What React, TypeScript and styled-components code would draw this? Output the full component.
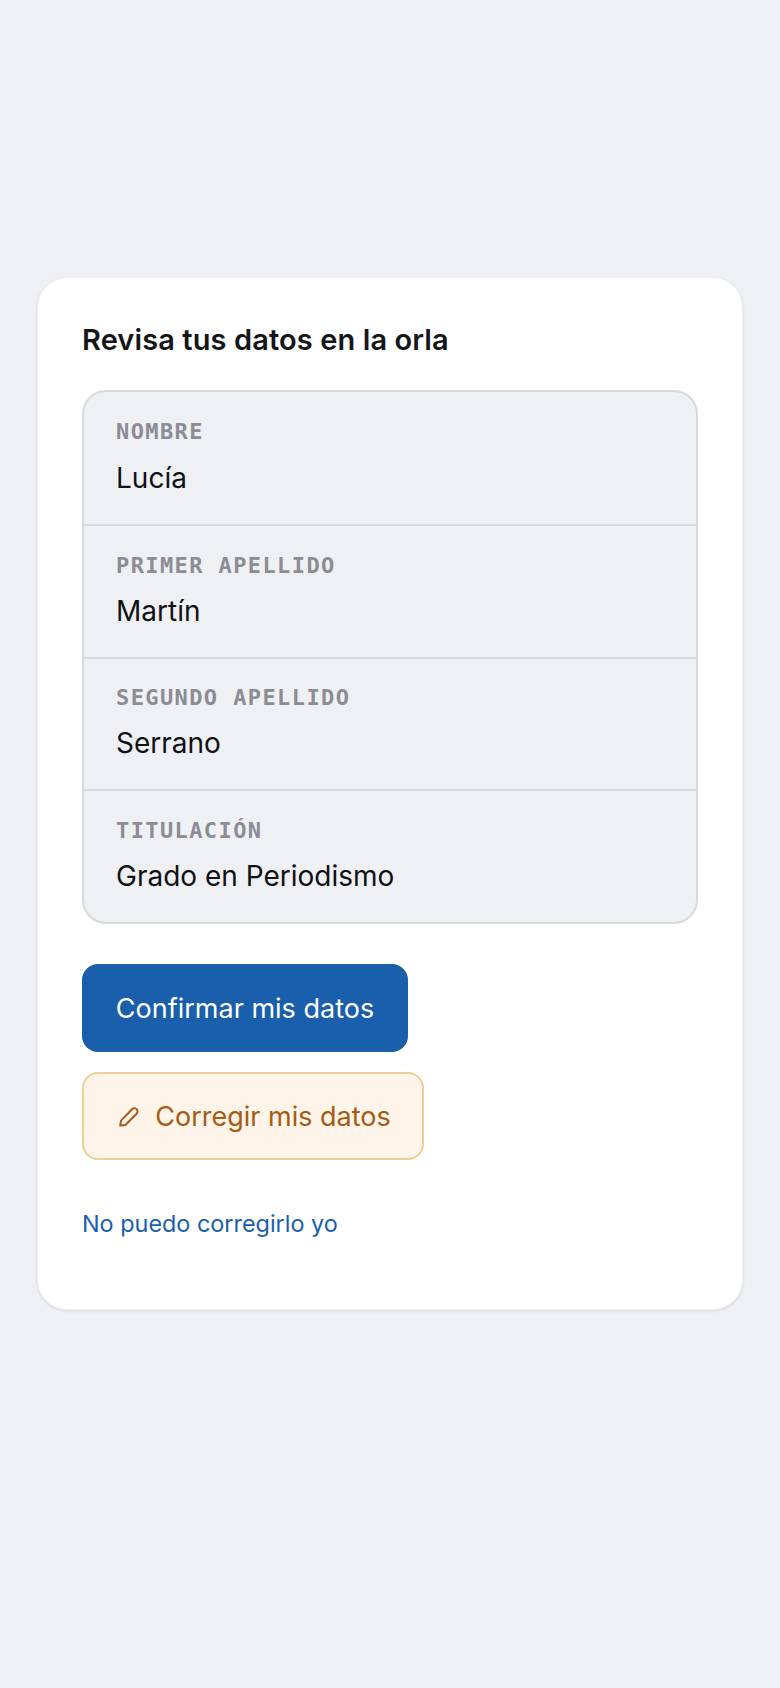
import React from "react";
import styled, { createGlobalStyle } from "styled-components";

const Global = createGlobalStyle`
  html, body { margin: 0; padding: 0; background: #eef0f4; }
  * { box-sizing: border-box; }
`;
const Page = styled.main`
  min-height: 1688px;
  padding: 277px 37px 0;
  font-family: Inter, "Liberation Sans", sans-serif;
`;
const Card = styled.section`
  width: 706px;
  height: 1033px;
  padding: 44px 44px 0;
  background: #fff;
  border: 1px solid #eceef1;
  border-radius: 30px;
  box-shadow: 0 1px 3px rgba(20, 24, 40, 0.1);
`;
const Title = styled.h1`
  margin: 0 0 31.5px;
  font-size: 29px;
  line-height: 36px;
  font-weight: 600;
  letter-spacing: 0.1px;
  color: #14161a;
`;
const List = styled.dl`
  margin: 0 0 40px;
  background: #eef0f4;
  border: 2px solid #d6d9de;
  border-radius: 24px;
  overflow: hidden;
`;
const Label = styled.dt`
  font-family: "DejaVu Sans Mono", "Liberation Mono", monospace;
  font-weight: 700;
  font-size: 22px;
  line-height: 28px;
  letter-spacing: 1.4px;
  color: #8b8c94;
`;
const Value = styled.dd`
  margin: 14.5px 0 0;
  font-size: 28px;
  line-height: 36px;
  color: #101114;
`;
const Row = styled.div`
  height: 132.67px;
  padding: 26px 32px 0;
  & + & { border-top: 2px solid #d6d9de; padding-top: 25.5px; }
  & + & ${Value} { margin-top: 13px; }
`;
const Actions = styled.div`
  display: flex;
  flex-direction: column;
  align-items: flex-start;
  gap: 20px;
`;
const Primary = styled.button`
  height: 88px;
  width: 326px;
  padding: 0;
  border: none;
  border-radius: 16px;
  background: #1a5fac;
  color: #fff;
  font: 400 27px Inter, "Liberation Sans", sans-serif;
`;
const Secondary = styled.button`
  display: flex;
  align-items: center;
  justify-content: center;
  gap: 12px;
  height: 88px;
  width: 342px;
  padding: 0;
  border: 2px solid #eccf96;
  border-radius: 16px;
  background: #fef4e9;
  color: #a85a12;
  font: 400 27px Inter, "Liberation Sans", sans-serif;
`;
const LinkText = styled.a`
  display: block;
  margin-top: 46px;
  font-size: 23.4px;
  line-height: 36px;
  color: #1a5fac;
`;
const Pencil = () => (
  <svg width="28" height="28" viewBox="0 0 28 28" fill="none" stroke="currentColor" strokeWidth="2" strokeLinejoin="round">
    <path d="M5.2 23.6 6 18.6 17 7.2a3.2 3.2 0 0 1 4.6 4.5L10.4 23Z" />
  </svg>
);
const rows = [
  ["NOMBRE", "Lucía"],
  ["PRIMER APELLIDO", "Martín"],
  ["SEGUNDO APELLIDO", "Serrano"],
  ["TITULACIÓN", "Grado en Periodismo"],
];
export default function App() {
  return (
    <Page>
      <Global />
      <Card>
        <Title>Revisa tus datos en la orla</Title>
        <List>
          {rows.map(([l, v]) => (
            <Row key={l}>
              <Label>{l}</Label>
              <Value>{v}</Value>
            </Row>
          ))}
        </List>
        <Actions>
          <Primary>Confirmar mis datos</Primary>
          <Secondary><Pencil />Corregir mis datos</Secondary>
        </Actions>
        <LinkText>No puedo corregirlo yo</LinkText>
      </Card>
    </Page>
  );
}
